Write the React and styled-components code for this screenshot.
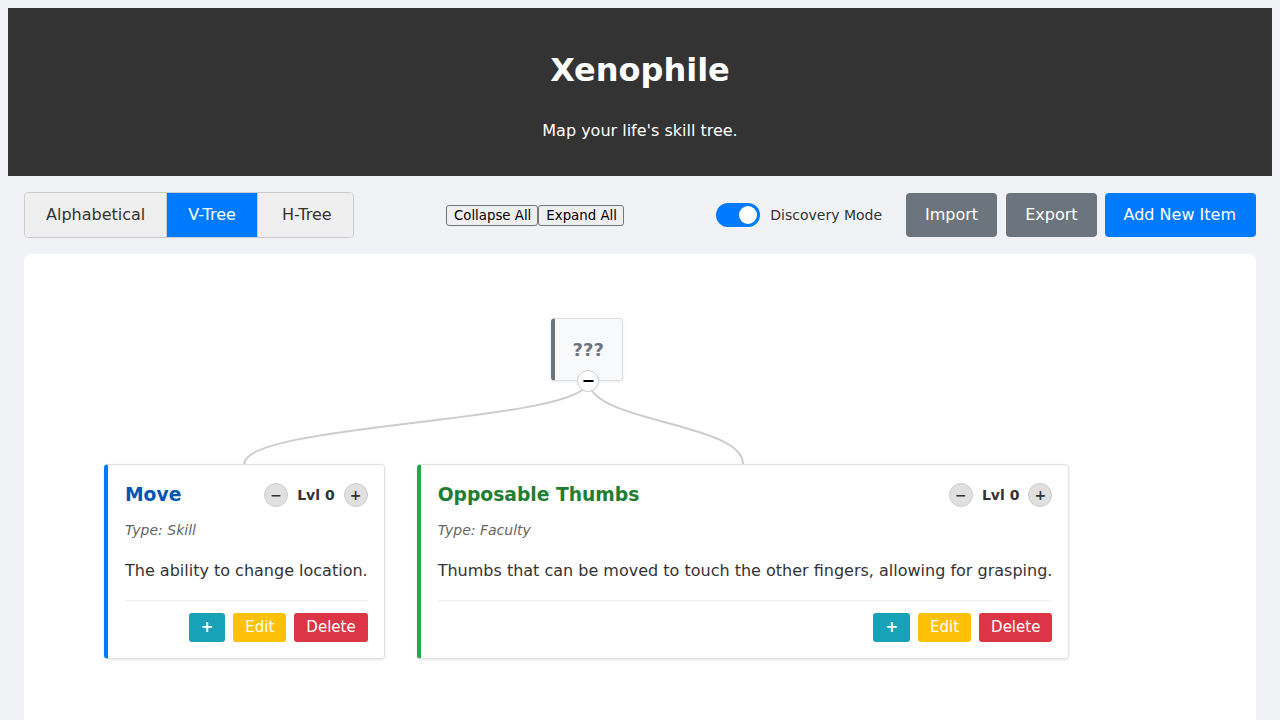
import React, { useLayoutEffect, useRef, useState } from 'react';
import styled, { createGlobalStyle } from 'styled-components';

const GlobalStyle = createGlobalStyle`
  body {
    margin: 8px;
    background: #f0f2f5;
    font-family: "DejaVu Sans", "Noto Sans", sans-serif;
    color: #333;
  }
`;

const Header = styled.header`
  background: #333;
  color: #fff;
  text-align: center;
  padding: 43px 20px 35px;
`;

const Title = styled.h1`
  margin: 0;
  font-size: 32px;
  line-height: 38px;
  font-weight: bold;
`;

const Subtitle = styled.p`
  margin: 32px 0 0;
  font-size: 16px;
  line-height: 20px;
`;

const Main = styled.main`
  padding: 16px;
`;

const Toolbar = styled.div`
  display: flex;
  justify-content: space-between;
  align-items: center;
  margin-bottom: 16px;
`;

const ViewSwitch = styled.div`
  display: flex;
  border: 1px solid #ccc;
  border-radius: 4px;
  overflow: hidden;
  background: #efefef;
`;

const ViewButton = styled.button`
  font-family: inherit;
  font-size: 16px;
  line-height: 20px;
  padding: 12px 21px;
  margin-left: ${props => props.spaced ? '3px' : '0'};
  border: none;
  border-right: ${props => props.last ? 'none' : '1px solid #ccc'};
  background: ${props => props.active ? '#007bff' : '#efefef'};
  color: ${props => props.active ? '#fff' : '#333'};
  cursor: pointer;
`;

const PlainGroup = styled.div`
  display: flex;
`;

const PlainButton = styled.button`
  font-family: "DejaVu Sans", sans-serif;
  font-size: 13.333px;
  line-height: 15px;
  padding: 2px 6px 2px 7px;
  border: 1px solid #767676;
  border-radius: 3px;
  background: #efefef;
  color: #000;
`;

const RightGroup = styled.div`
  display: flex;
  align-items: center;
`;

const Discovery = styled.label`
  display: flex;
  align-items: center;
  gap: 10px;
  font-size: 14px;
  color: #333;
  margin-right: 24px;
`;

const Switch = styled.span`
  position: relative;
  width: 44px;
  height: 24px;
  border-radius: 12px;
  background: ${props => props.on ? '#007bff' : '#ccc'};

  &::after {
    content: '';
    position: absolute;
    top: 3px;
    left: ${props => props.on ? '23px' : '3px'};
    width: 18px;
    height: 18px;
    border-radius: 50%;
    background: #fff;
  }
`;

const ActionButton = styled.button`
  font-family: inherit;
  font-size: 16px;
  line-height: 24px;
  padding: 10px ${props => props.variant === 'primary' ? '20px 10px 19px' : '19px'};
  margin-left: ${props => props.first ? '0' : props.variant === 'primary' ? '8px' : '9px'};
  border: none;
  border-radius: 4px;
  background: ${props => props.variant === 'primary' ? '#007bff' : '#6c757d'};
  color: #fff;
  cursor: pointer;
`;

const Panel = styled.section`
  background: #fff;
  border-radius: 8px;
  padding: 64px 80px;
  min-height: 500px;
`;

const Tree = styled.div`
  display: inline-flex;
  flex-direction: column;
  align-items: center;
`;

const RootNode = styled.div`
  position: relative;
  z-index: 1;
  background: #f8f9fa;
  border: 1px solid #ddd;
  border-left: 4px solid #6c757d;
  border-radius: 4px;
  box-shadow: 0 1px 3px rgba(0, 0, 0, 0.08);
  padding: 20px 18px;
  font-size: 18px;
  line-height: 21px;
  font-weight: bold;
  color: #6c757d;
`;

const CollapseToggle = styled.button`
  position: absolute;
  left: 50%;
  bottom: -12px;
  transform: translateX(-50%);
  width: 22px;
  height: 22px;
  padding: 0;
  border-radius: 50%;
  border: 1px solid #ccc;
  background: #fff;
  color: #000;
  font-family: inherit;
  font-size: 16px;
  font-weight: bold;
  line-height: 18px;
`;

const Links = styled.svg`
  display: block;
  width: 100%;
  height: 83px;
`;

const Children = styled.div`
  display: flex;
  align-items: flex-start;
  gap: 32px;
`;

const Card = styled.div`
  background: #fff;
  border: 1px solid #e0e0e0;
  border-left: 4px solid ${props => props.accent};
  border-radius: 4px;
  box-shadow: 0 1px 3px rgba(0, 0, 0, 0.1);
  padding: 15px 16px 16px 17px;
  white-space: nowrap;
`;

const CardHeader = styled.div`
  display: flex;
  justify-content: space-between;
  align-items: center;
  gap: 24px;
`;

const CardTitle = styled.h3`
  margin: 0;
  font-size: 18.72px;
  line-height: 30px;
  font-weight: bold;
  color: ${props => props.color};
`;

const Level = styled.div`
  display: flex;
  align-items: center;
  gap: 9px;
  font-size: 14px;
  font-weight: bold;
  color: #333;
`;

const LevelButton = styled.button`
  width: 24px;
  height: 24px;
  padding: 0;
  border-radius: 50%;
  border: 1px solid #ccc;
  background: #e0e0e0;
  color: #333;
  font-family: inherit;
  font-size: 14px;
  font-weight: bold;
  line-height: 20px;
`;

const CardType = styled.p`
  margin: 10px 0 0;
  font-size: 14px;
  line-height: 20px;
  font-style: italic;
  color: #666;
`;

const CardText = styled.p`
  margin: 19px 0 0;
  font-size: 16px;
  line-height: 24px;
  color: #333;
`;

const CardActions = styled.div`
  display: flex;
  justify-content: flex-end;
  gap: 8px;
  margin-top: 17px;
  padding-top: 12px;
  border-top: 1px solid #eee;
`;

const SmallButton = styled.button`
  font-family: inherit;
  font-size: 15px;
  line-height: 17px;
  font-weight: ${props => props.bold ? 'bold' : 'normal'};
  padding: 6px 12px;
  border: none;
  border-radius: 3px;
  background: ${props => props.bg};
  color: #fff;
`;

const items = [
  {
    name: 'Move',
    type: 'Skill',
    text: 'The ability to change location.',
    accent: '#007bff',
    color: '#0056b3'
  },
  {
    name: 'Opposable Thumbs',
    type: 'Faculty',
    text: 'Thumbs that can be moved to touch the other fingers, allowing for grasping.',
    accent: '#28a745',
    color: '#1e7e34'
  }
];

const SkillCard = React.forwardRef(({ item }, ref) => (
  <Card ref={ref} accent={item.accent}>
    <CardHeader>
      <CardTitle color={item.color}>{item.name}</CardTitle>
      <Level>
        <LevelButton>−</LevelButton>
        <span>Lvl 0</span>
        <LevelButton>+</LevelButton>
      </Level>
    </CardHeader>
    <CardType>Type: {item.type}</CardType>
    <CardText>{item.text}</CardText>
    <CardActions>
      <SmallButton bg="#17a2b8" bold>+</SmallButton>
      <SmallButton bg="#ffc107">Edit</SmallButton>
      <SmallButton bg="#dc3545">Delete</SmallButton>
    </CardActions>
  </Card>
));

const App = () => {
  const treeRef = useRef(null);
  const rootRef = useRef(null);
  const childRefs = useRef([]);
  const [links, setLinks] = useState([]);

  useLayoutEffect(() => {
    const box = treeRef.current.getBoundingClientRect();
    const root = rootRef.current.getBoundingClientRect();
    const x1 = root.left - box.left + 2 + root.width / 2;
    setLinks(childRefs.current.map(el => {
      const r = el.getBoundingClientRect();
      const x2 = r.left - box.left + r.width / 2;
      return `M${x1},0 C${x1},41.5 ${x2},41.5 ${x2},83`;
    }));
  }, []);

  return (
    <>
      <GlobalStyle />
      <Header>
        <Title>Xenophile</Title>
        <Subtitle>Map your life's skill tree.</Subtitle>
      </Header>
      <Main>
        <Toolbar>
          <ViewSwitch>
            <ViewButton>Alphabetical</ViewButton>
            <ViewButton active>V-Tree</ViewButton>
            <ViewButton last spaced>H-Tree</ViewButton>
          </ViewSwitch>
          <PlainGroup>
            <PlainButton>Collapse All</PlainButton>
            <PlainButton>Expand All</PlainButton>
          </PlainGroup>
          <RightGroup>
            <Discovery>
              <Switch on />
              Discovery Mode
            </Discovery>
            <ActionButton first>Import</ActionButton>
            <ActionButton>Export</ActionButton>
            <ActionButton variant="primary">Add New Item</ActionButton>
          </RightGroup>
        </Toolbar>
        <Panel>
          <Tree ref={treeRef}>
            <RootNode ref={rootRef}>
              ???
              <CollapseToggle>−</CollapseToggle>
            </RootNode>
            <Links>
              {links.map((d, i) => (
                <path key={i} d={d} fill="none" stroke="#ccc" strokeWidth="2" />
              ))}
            </Links>
            <Children>
              {items.map((item, i) => (
                <SkillCard key={item.name} item={item} ref={el => (childRefs.current[i] = el)} />
              ))}
            </Children>
          </Tree>
        </Panel>
      </Main>
    </>
  );
};

export default App;
